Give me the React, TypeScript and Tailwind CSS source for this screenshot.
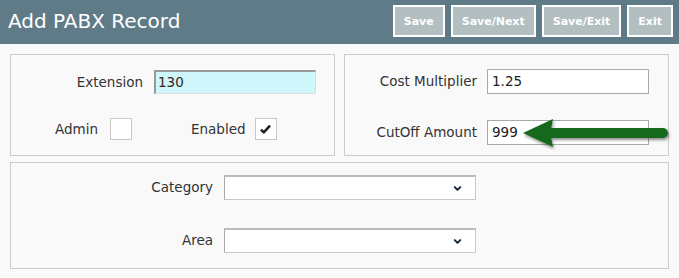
import { ChevronDown } from "lucide-react";

const font = { fontFamily: '"DejaVu Sans", Verdana, sans-serif' };

function HeaderButton({ label }: { label: string }) {
    return (
        <button className="h-8 px-[9px] border-2 border-white bg-[#b2bec0] text-white text-[11px] font-bold leading-none">
            {label}
        </button>
    );
}

function Checkbox({ checked }: { checked?: boolean }) {
    return (
        <div className="w-[22px] h-[22px] border border-[#c8c8c8] bg-white flex items-center justify-center">
            {checked && (
                <svg width="11" height="10" viewBox="0 0 11 10">
                    <path d="M1 5.6 L3.8 8.4 L10 1.6" fill="none" stroke="#222" strokeWidth="2.6" strokeLinejoin="round" />
                </svg>
            )}
        </div>
    );
}

function SelectBox() {
    return (
        <div className="w-[252px] h-[25px] bg-white border border-[#c9c9c9] border-t-2 border-l-[#aaaaaa] border-t-[#bbbbbb] flex items-center justify-end pr-[12px]">
            <ChevronDown className="w-[11px] h-[11px] text-[#1c2b3a]" strokeWidth={4.5} />
        </div>
    );
}

export default function App() {
    return (
        <div className="w-[679px] h-[278px] bg-[#f9f9f9] relative overflow-hidden" style={font}>
            {/* Header */}
            <div className="h-[44px] bg-[#5f7b88] flex items-center justify-between pl-[8px] pr-[6px]">
                <h1 className="text-white text-[20px] leading-none -mt-[2px]">Add PABX Record</h1>
                <div className="flex gap-[6px] -mt-[2px]">
                    <HeaderButton label="Save" />
                    <HeaderButton label="Save/Next" />
                    <HeaderButton label="Save/Exit" />
                    <HeaderButton label="Exit" />
                </div>
            </div>

            <div className="px-[10px] pt-[10px]">
                <div className="flex gap-[9px]">
                    {/* Left panel */}
                    <div className="w-[326px] h-[102px] border border-[#cccccc] pt-[15px] text-[13.5px] text-[#333]">
                        <div className="flex items-center">
                            <span className="w-[132px] text-right">Extension</span>
                            <div className="ml-[11px] w-[162px] h-[24px] bg-[#cff6fb] border-t-2 border-l-2 border-[#999] border-r border-b border-r-[#ddd] border-b-[#ddd] pl-[2px] flex items-center text-[#3a2418]">
                                130
                            </div>
                        </div>
                        <div className="flex items-center mt-[24px]">
                            <span className="ml-[44px] w-[45px]">Admin</span>
                            <div className="ml-[10px]">
                                <Checkbox />
                            </div>
                            <span className="ml-[59px]">Enabled</span>
                            <div className="ml-[9px]">
                                <Checkbox checked />
                            </div>
                        </div>
                    </div>

                    {/* Right panel */}
                    <div className="w-[326px] h-[102px] border border-[#cccccc] pt-[14px] text-[13.5px] text-[#333]">
                        <div className="flex items-center">
                            <span className="w-[132px] text-right">Cost Multiplier</span>
                            <div className="ml-[10px] w-[162px] h-[25px] bg-white border border-[#a9a9a9] pl-[4px] flex items-center text-[#222]">
                                1.25
                            </div>
                        </div>
                        <div className="flex items-center mt-[26px]">
                            <span className="w-[132px] text-right">CutOff Amount</span>
                            <div className="ml-[10px] w-[162px] h-[25px] bg-white border border-[#a9a9a9] pl-[4px] flex items-center text-[#222]">
                                999
                            </div>
                        </div>
                    </div>
                </div>

                {/* Bottom panel */}
                <div className="mt-[6px] w-[659px] h-[107px] border border-[#cccccc] pt-[12px] text-[13.5px] text-[#333]">
                    <div className="flex items-center">
                        <span className="w-[202px] text-right">Category</span>
                        <div className="ml-[11px]">
                            <SelectBox />
                        </div>
                    </div>
                    <div className="flex items-center mt-[28px]">
                        <span className="w-[202px] text-right">Area</span>
                        <div className="ml-[11px]">
                            <SelectBox />
                        </div>
                    </div>
                </div>
            </div>

            {/* Annotation arrow */}
            <svg className="absolute left-[520px] top-[116px]" width="156" height="40" viewBox="0 0 156 40">
                <defs>
                    <filter id="sh" x="-10%" y="-30%" width="120%" height="160%">
                        <feDropShadow dx="1" dy="2" stdDeviation="1.5" floodColor="#000" floodOpacity="0.45" />
                    </filter>
                </defs>
                <g filter="url(#sh)">
                    <path d="M3 17 L33 3 L31 13 L31 21 L33 31 Z" fill="#17691f" />
                    <line x1="30" y1="17" x2="143" y2="17" stroke="#17691f" strokeWidth="10" strokeLinecap="round" />
                </g>
            </svg>
        </div>
    );
}
